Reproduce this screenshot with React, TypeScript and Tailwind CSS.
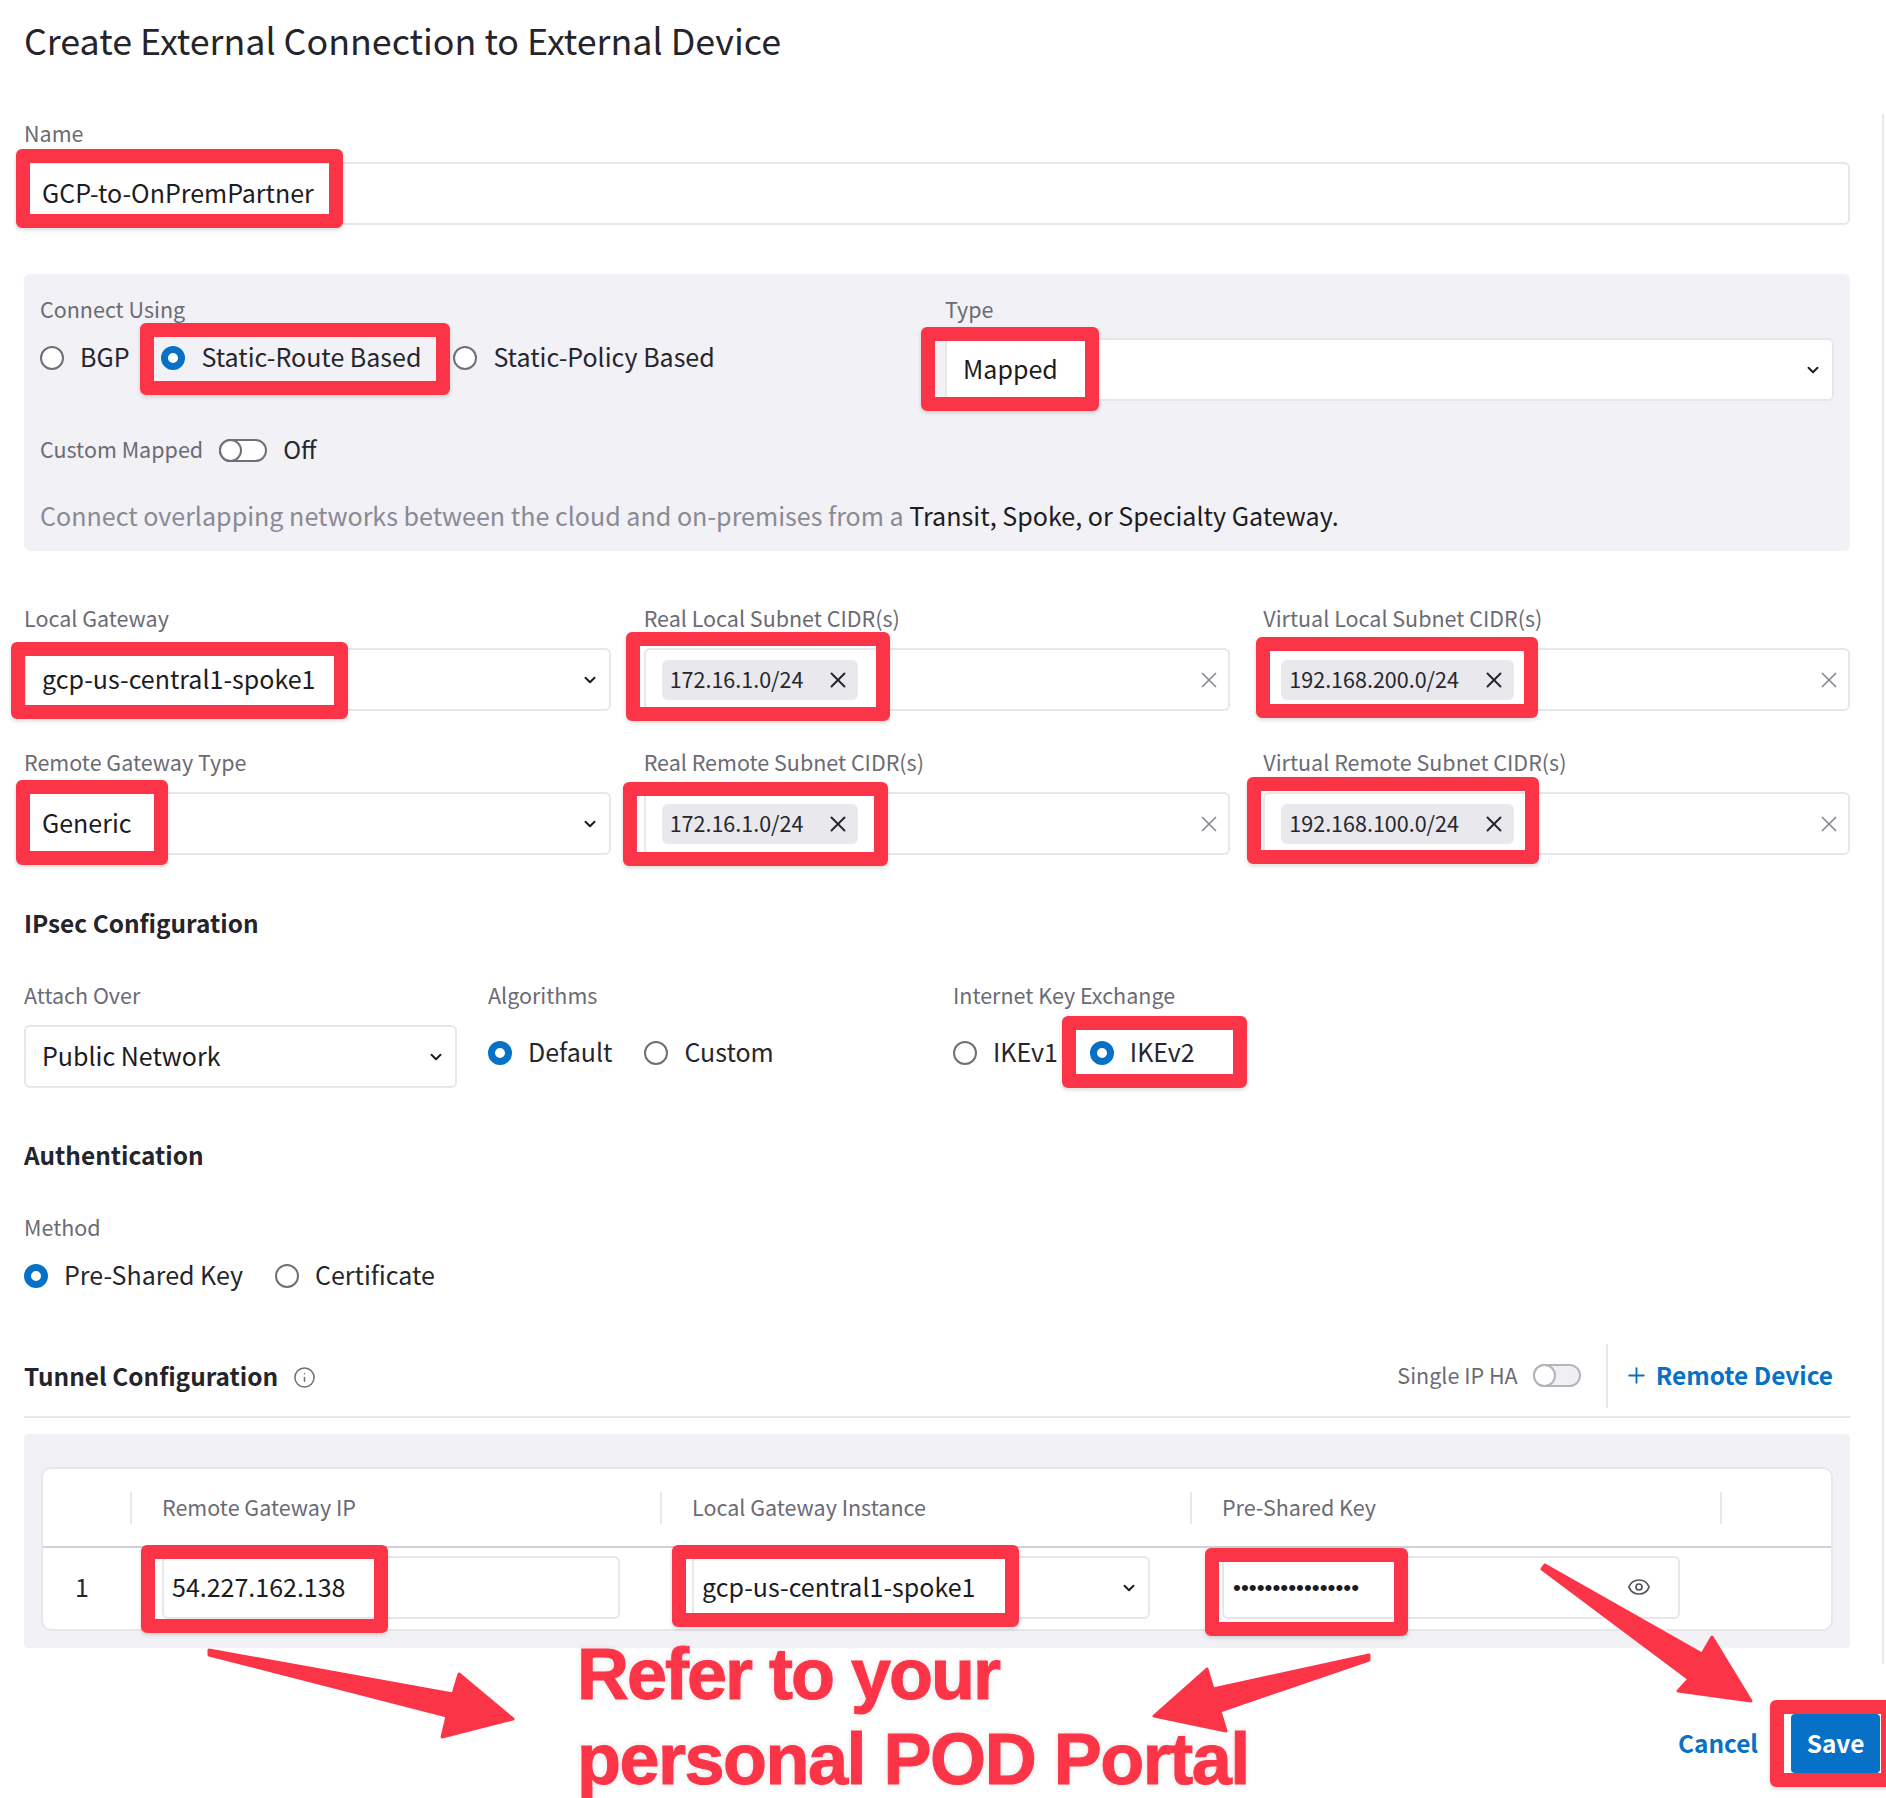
import { ChevronDown, Eye, Info, Plus, X } from "lucide-react";
import type { ReactNode } from "react";

const labelCls = "block h-[28px] text-[21.5px] leading-[26px] text-[#6b6b74]";
const inputCls = "flex items-center bg-white border-2 border-[#e6e6eb] rounded-[6px] text-[25px] text-[#1c1c22]";

function Radio({ label, checked }: { label: string; checked?: boolean }) {
  return (
    <div className="flex items-center gap-[16px] text-[25px] leading-[36px] text-[#26262c]">
      {checked ? (
        <span className="w-[24px] h-[24px] rounded-full border-[7px] border-[#0671c6] bg-white" />
      ) : (
        <span className="w-[24px] h-[24px] rounded-full border-2 border-[#6f6f77] bg-white" />
      )}
      <span className="pb-[3px]">{label}</span>
    </div>
  );
}

function Toggle({ filled }: { filled?: boolean }) {
  return (
    <span className={`relative block w-[48px] h-[23px] rounded-full border-2 ${filled ? "border-[#b4b4bc] bg-[#f0f0f4]" : "border-[#6f6f77] bg-white"}`}>
      <span className={`absolute left-[-2px] top-[-2px] w-[23px] h-[23px] rounded-full border-2 bg-white ${filled ? "border-[#b4b4bc]" : "border-[#6f6f77]"}`} />
    </span>
  );
}

function SelectBox({ value, className }: { value: string; className: string }) {
  return (
    <div className={`${inputCls} justify-between pl-[16px] pr-[10px] ${className}`}>
      <span className="pb-[1px]">{value}</span>
      <ChevronDown className="w-[18px] h-[18px] text-[#1c1c22]" strokeWidth={2.6} />
    </div>
  );
}

function ChipInput({ chip }: { chip: string }) {
  return (
    <div className={`${inputCls} justify-between pl-[16px] pr-[6px] h-[63px]`}>
      <span className="flex items-center h-[40px] pl-[8px] pr-[7px] gap-[22px] rounded-[6px] bg-[#e8e8ed] text-[21.5px] text-[#26262c]">
        <span>{chip}</span>
        <X className="w-[26px] h-[26px]" strokeWidth={1.8} />
      </span>
      <X className="w-[26px] h-[26px] text-[#8a8a93]" strokeWidth={1.6} />
    </div>
  );
}

function Field({ label, children }: { label: string; children: ReactNode }) {
  return (
    <div>
      <label className={labelCls}>{label}</label>
      <div className="mt-[15px]">{children}</div>
    </div>
  );
}

// red annotation boxes sit over the form
const boxes = [
  "left-[16px] top-[149px] w-[327px] h-[79px]",
  "left-[140px] top-[323px] w-[310px] h-[72px]",
  "left-[921px] top-[327px] w-[178px] h-[84px]",
  "left-[11px] top-[642px] w-[337px] h-[77px]",
  "left-[626px] top-[632px] w-[264px] h-[89px]",
  "left-[16px] top-[780px] w-[152px] h-[85px]",
  "left-[623px] top-[782px] w-[265px] h-[84px]",
  "left-[1256px] top-[637px] w-[282px] h-[81px]",
  "left-[1247px] top-[777px] w-[292px] h-[87px]",
  "left-[1062px] top-[1016px] w-[185px] h-[72px]",
  "left-[141px] top-[1545px] w-[247px] h-[88px]",
  "left-[672px] top-[1545px] w-[347px] h-[82px]",
  "left-[1205px] top-[1548px] w-[203px] h-[88px]",
  "left-[1770px] top-[1700px] w-[125px] h-[87px]",
];

export default function App() {
  return (
    <div className="relative w-[1886px] h-[1798px] overflow-hidden bg-white pl-[24px] pr-[36px] pt-[16px] font-['Noto_Sans_CJK_JP','Noto_Sans',sans-serif]">
      <h1 className="h-[52px] text-[35.8px] leading-[46px] text-[#24242a]">Create External Connection to External Device</h1>

      <div className="mt-[52px]">
        <label className={labelCls}>Name</label>
        <div className={`${inputCls} mt-[14px] h-[63px] pl-[16px]`}><span className="pb-[1px]">GCP-to-OnPremPartner</span></div>
      </div>

      <div className="mt-[49px] h-[277px] rounded-[6px] bg-[#f1f1f6] px-[16px] pt-[22px]">
        <div className="grid grid-cols-[872px_1fr] gap-[33px]">
          <div>
            <label className={labelCls}>Connect Using</label>
            <div className="mt-[14px] flex gap-[32px]">
              <Radio label="BGP" />
              <Radio label="Static-Route Based" checked />
              <Radio label="Static-Policy Based" />
            </div>
          </div>
          <div>
            <label className={labelCls}>Type</label>
            <SelectBox value="Mapped" className="mt-[14px] h-[63px]" />
          </div>
        </div>
        <div className="mt-[32px] flex items-center h-[34px]">
          <span className="text-[21.5px] pb-[2px] text-[#6b6b74]">Custom Mapped</span>
          <span className="ml-[16px]"><Toggle /></span>
          <span className="ml-[16px] text-[24px] pb-[2px] text-[#26262c]">Off</span>
        </div>
        <p className="mt-[30px] text-[25.07px] leading-[36px] text-[#8a8a94]">
          Connect overlapping networks between the cloud and on-premises from a <span className="text-[#1c1c22]">Transit, Spoke, or Specialty Gateway.</span>
        </p>
      </div>

      <div className="mt-[54px] grid grid-cols-3 gap-x-[33px] gap-y-[38px]">
        <Field label="Local Gateway"><SelectBox value="gcp-us-central1-spoke1" className="h-[63px]" /></Field>
        <Field label="Real Local Subnet CIDR(s)"><ChipInput chip="172.16.1.0/24" /></Field>
        <Field label="Virtual Local Subnet CIDR(s)"><ChipInput chip="192.168.200.0/24" /></Field>
        <Field label="Remote Gateway Type"><SelectBox value="Generic" className="h-[63px]" /></Field>
        <Field label="Real Remote Subnet CIDR(s)"><ChipInput chip="172.16.1.0/24" /></Field>
        <Field label="Virtual Remote Subnet CIDR(s)"><ChipInput chip="192.168.100.0/24" /></Field>
      </div>

      <h2 className="mt-[49px] h-[38px] text-[24.4px] leading-[38px] font-semibold text-[#24242a]">IPsec Configuration</h2>
      <div className="mt-[40px] flex">
        <div className="w-[433px]">
          <label className={labelCls}>Attach Over</label>
          <SelectBox value="Public Network" className="mt-[15px] h-[63px]" />
        </div>
        <div className="ml-[31px] w-[433px]">
          <label className={labelCls}>Algorithms</label>
          <div className="mt-[23px] flex gap-[32px]">
            <Radio label="Default" checked />
            <Radio label="Custom" />
          </div>
        </div>
        <div className="ml-[32px]">
          <label className={labelCls}>Internet Key Exchange</label>
          <div className="mt-[23px] flex gap-[32px]">
            <Radio label="IKEv1" />
            <Radio label="IKEv2" checked />
          </div>
        </div>
      </div>

      <h2 className="mt-[49px] h-[38px] text-[24.4px] leading-[36px] font-semibold text-[#24242a]">Authentication</h2>
      <label className={`${labelCls} mt-[39px]`}>Method</label>
      <div className="mt-[14px] flex gap-[32px]">
        <Radio label="Pre-Shared Key" checked />
        <Radio label="Certificate" />
      </div>

      <div className="mt-[53px] flex items-center justify-between h-[70px] border-b-2 border-[#e6e6eb] pb-[13px]">
        <div className="flex items-center gap-[15px]">
          <h2 className="text-[24.4px] leading-[36px] font-semibold text-[#24242a]">Tunnel Configuration</h2>
          <Info className="mt-[3px] w-[23px] h-[23px] text-[#6f6f77]" strokeWidth={1.6} />
        </div>
        <div className="flex items-center h-[64px] mr-[17px]">
          <span className="text-[21.5px] text-[#6b6b74]">Single IP HA</span>
          <span className="ml-[15px]"><Toggle filled /></span>
          <span className="ml-[25px] w-[2px] h-[64px] bg-[#e6e6eb]" />
          <Plus className="ml-[16px] w-[25px] h-[25px] text-[#0671c6]" strokeWidth={1.8} />
          <span className="ml-[7px] text-[24.4px] font-semibold text-[#0671c6]">Remote Device</span>
        </div>
      </div>

      <div className="mt-[16px] h-[214px] rounded-[4px] bg-[#f1f1f6] px-[17px] pt-[33px]">
        <div className="h-[164px] rounded-[10px] border-2 border-[#e6e6eb] bg-white">
          <div className="grid grid-cols-[87px_530px_530px_530px_1fr] h-[79px] border-b-2 border-[#d0d0d6] items-center">
            <span />
            {["Remote Gateway IP", "Local Gateway Instance", "Pre-Shared Key", ""].map((h) => (
              <span key={h} className="flex items-center h-[32px] border-l-2 border-[#e6e6eb] pl-[30px] text-[21.5px] text-[#6b6b74]">{h}</span>
            ))}
          </div>
          <div className="grid grid-cols-[87px_530px_530px_530px_1fr] items-center pt-[8px]">
            <span className="pl-[32px] pb-[1px] text-[25px] text-[#26262c]">1</span>
            <div className="pl-[32px]">
              <div className={`${inputCls} h-[63px] w-[458px] pl-[8px]`}><span className="pb-[1px]">54.227.162.138</span></div>
            </div>
            <div className="pl-[32px]">
              <SelectBox value="gcp-us-central1-spoke1" className="h-[63px] w-[458px] !pl-[8px]" />
            </div>
            <div className="pl-[32px]">
              <div className={`${inputCls} h-[63px] w-[458px] justify-between pl-[9px] pr-[27px]`}>
                <span className="text-[22.5px] font-['Liberation_Sans',sans-serif]">••••••••••••••••</span>
                <Eye className="-mt-[2px] w-[24px] h-[24px] text-[#55555c]" strokeWidth={1.7} />
              </div>
            </div>
          </div>
        </div>
      </div>

      <div className="absolute left-[1678px] top-[1714px] flex items-center h-[59px] text-[24.4px] font-semibold text-[#0671c6]">Cancel</div>
      <div className="absolute left-[1791px] top-[1714px] flex items-center justify-center w-[89px] h-[59px] rounded-[4px] bg-[#0671c6] text-[24.4px] font-semibold text-white">Save</div>

      <span className="absolute left-[1882px] top-[114px] w-[2px] h-[1550px] bg-[#e6e6eb]" />

      {boxes.map((b) => (
        <div key={b} className={`absolute ${b} border-[14px] border-[#fb3547] rounded-[6px] shadow-[0_2px_4px_rgba(0,0,0,0.15)]`} />
      ))}

      <svg className="absolute left-0 top-0 pointer-events-none" width="1886" height="1798" viewBox="0 0 1886 1798">
        <g fill="#fb3547" stroke="#fb3547" strokeWidth="3" strokeLinejoin="round">
          <polygon points="209,1650 453,1694 459,1674 513,1719 442,1737 447,1716 209,1655" />
          <polygon points="1369,1655 1213,1689 1207,1669 1154,1716 1226,1731 1220,1711 1369,1660" />
          <polygon points="1545,1565 1702,1654 1712,1637 1751,1701 1678,1691 1689,1679 1542,1569" />
        </g>
      </svg>

      <div className="absolute left-[577px] top-[1632px] text-[72px] leading-[85px] tracking-[-1.5px] font-bold text-[#fb3547] font-['Liberation_Sans',sans-serif] [-webkit-text-stroke:1px_#fb3547] [text-shadow:0_0_6px_#dcdcdc]">
        <span className="tracking-[-2px]">Refer to your</span>
        <br />
        personal POD Portal
      </div>
    </div>
  );
}
